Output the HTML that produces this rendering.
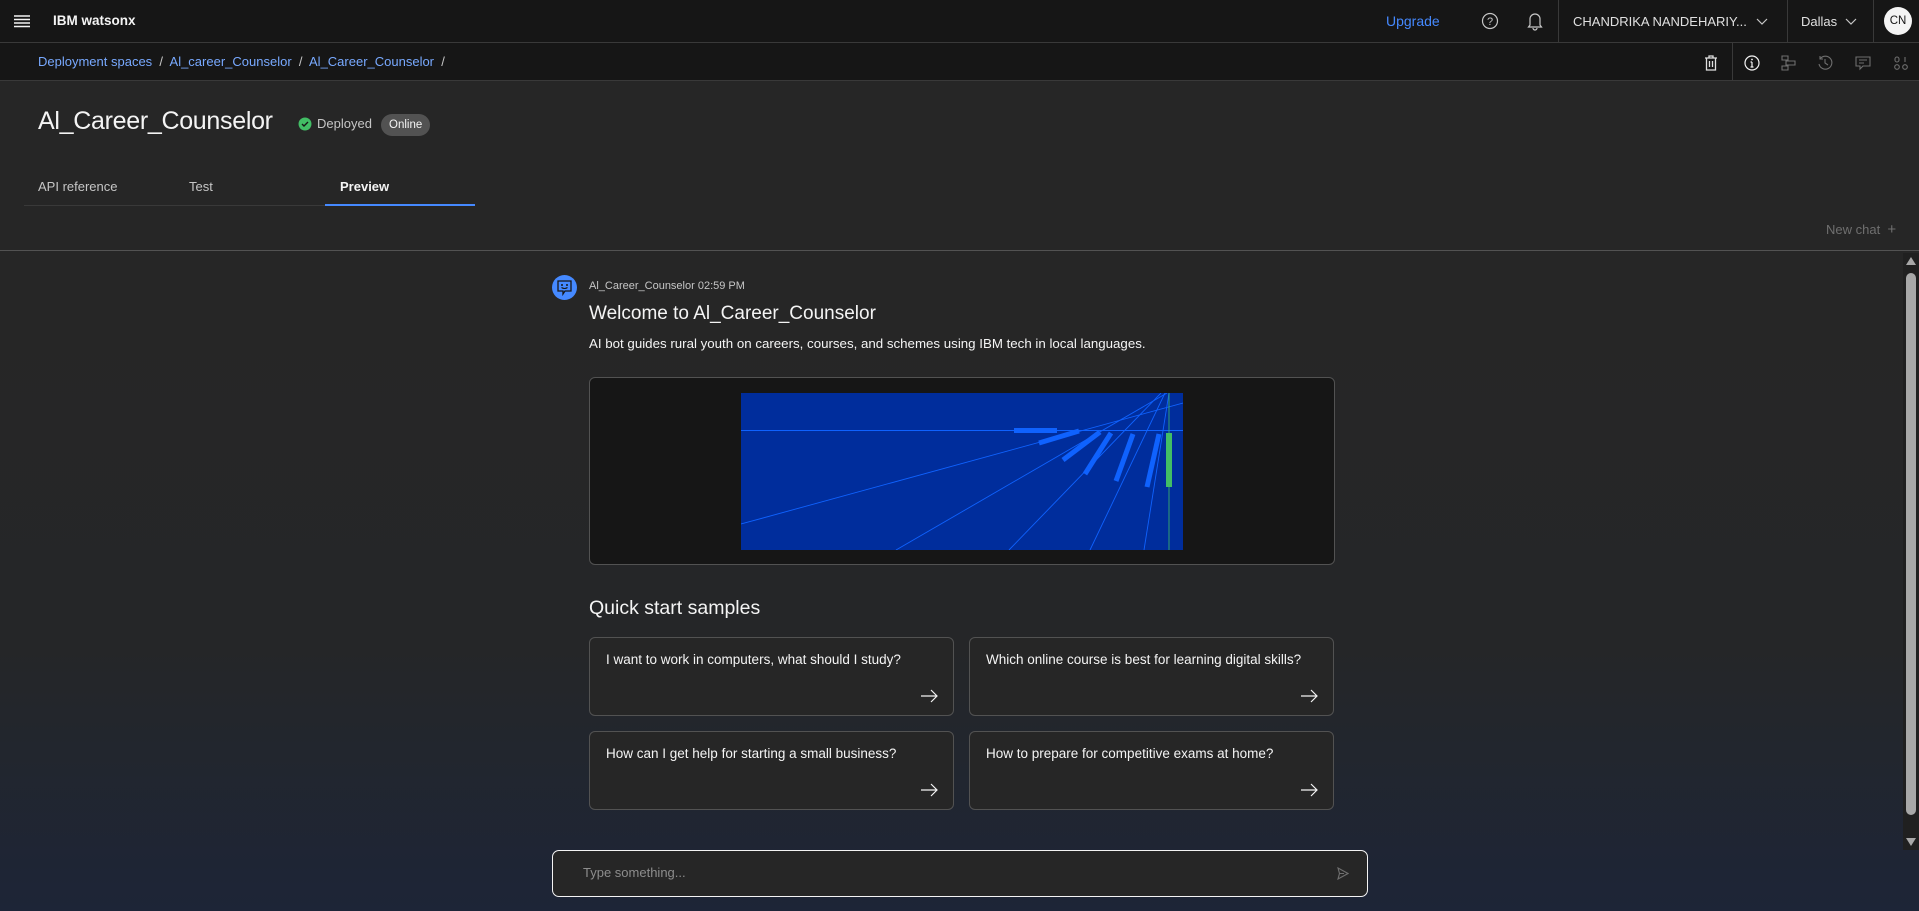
<!DOCTYPE html>
<html><head><meta charset="utf-8"><style>
*{box-sizing:border-box;margin:0;padding:0}
body{width:1919px;height:911px;overflow:hidden;background:#262626;font-family:"Liberation Sans",sans-serif;color:#f4f4f4;position:relative}
.abs{position:absolute}
.hdr{left:0;top:0;width:1919px;height:43px;background:#161616;border-bottom:1px solid #393939}
.bc{left:0;top:43px;width:1919px;height:38px;background:#161616;border-bottom:1px solid #393939}
.t{white-space:nowrap}
.chat{left:0;top:250px;width:1919px;height:661px;background:linear-gradient(#262626 0%,#252628 60%,#1d2537 100%);border-top:1px solid #525252}
.card{width:365px;height:79px;border:1px solid #525252;border-radius:6px;background:#262626}
.card span{position:absolute;left:16px;top:14px;font-size:13.5px;color:#f4f4f4}
.card svg{position:absolute;right:14px;bottom:12px}
</style></head><body>
<div class="abs hdr">
 <svg class="abs" style="left:14px;top:14px" width="16" height="14"><g stroke="#f4f4f4" stroke-width="1.4"><path d="M0 2H16M0 5.5H16M0 9H16M0 12.5H16"/></g></svg>
 <div class="abs t" style="left:53px;top:13px;font-size:13.5px;font-weight:bold">IBM watsonx</div>
 <div class="abs t" style="left:1386px;top:13px;font-size:14px;color:#4589ff">Upgrade</div>
 <svg class="abs" style="left:1481px;top:12px" width="18" height="18"><circle cx="9" cy="9" r="7.5" fill="none" stroke="#c6c6c6" stroke-width="1.2"/><text x="9" y="13" font-size="11" fill="#c6c6c6" text-anchor="middle" font-family="Liberation Sans">?</text></svg>
 <svg class="abs" style="left:1527px;top:11px" width="16" height="20"><path d="M3 14V8a5 5 0 0 1 10 0v6l1.5 2h-13z M6 17a2 2 0 0 0 4 0" fill="none" stroke="#c6c6c6" stroke-width="1.2"/></svg>
 <div class="abs" style="left:1558px;top:0;width:1px;height:43px;background:#393939"></div>
 <div class="abs t" style="left:1573px;top:14px;font-size:13px;color:#e0e0e0">CHANDRIKA NANDEHARIY...</div>
 <svg class="abs" style="left:1756px;top:18px" width="12" height="8"><path d="M1 1l5 5 5-5" fill="none" stroke="#c6c6c6" stroke-width="1.2"/></svg>
 <div class="abs" style="left:1787px;top:0;width:1px;height:43px;background:#393939"></div>
 <div class="abs t" style="left:1801px;top:14px;font-size:13px;color:#e0e0e0">Dallas</div>
 <svg class="abs" style="left:1845px;top:18px" width="12" height="8"><path d="M1 1l5 5 5-5" fill="none" stroke="#c6c6c6" stroke-width="1.2"/></svg>
 <div class="abs" style="left:1873px;top:0;width:1px;height:43px;background:#393939"></div>
 <div class="abs" style="left:1884px;top:7px;width:28px;height:28px;border-radius:50%;background:#f4f4f4;color:#161616;font-size:11.5px;text-align:center;line-height:28px">CN</div>
</div>
<div class="abs bc">
 <div class="abs t" style="left:38px;top:11px;font-size:13px;color:#78a9ff">Deployment spaces <span style="color:#c6c6c6">&nbsp;/&nbsp;</span> Al_career_Counselor <span style="color:#c6c6c6">&nbsp;/&nbsp;</span> Al_Career_Counselor <span style="color:#c6c6c6">&nbsp;/</span></div>
 <svg class="abs" style="left:1704px;top:12px" width="14" height="16"><path d="M1 3h12M5 3V1h4v2M2.5 3v12h9V3M5.5 6v6M8.5 6v6" fill="none" stroke="#e0e0e0" stroke-width="1.3"/></svg>
 <div class="abs" style="left:1732px;top:0;width:1px;height:38px;background:#393939"></div>
 <svg class="abs" style="left:1744px;top:12px" width="16" height="16"><circle cx="8" cy="8" r="7" fill="none" stroke="#f4f4f4" stroke-width="1.2"/><path d="M8 7v5M6.5 12h3M6.5 7H8" stroke="#f4f4f4" stroke-width="1.2"/><circle cx="8" cy="4.5" r="0.9" fill="#f4f4f4"/></svg>
 <svg class="abs" style="left:1781px;top:12px" width="16" height="16"><path d="M1 1h6v4H1zM5 6h9v4H5zM1 11h6v4H1z" fill="none" stroke="#6f6f6f" stroke-width="1.1"/></svg>
 <svg class="abs" style="left:1817px;top:12px" width="16" height="16"><path d="M3 4a6.5 6.5 0 1 1-1 5M3 1v3h3M8 4v4l3 2" fill="none" stroke="#6f6f6f" stroke-width="1.1"/></svg>
 <svg class="abs" style="left:1855px;top:12px" width="16" height="16"><path d="M1 2h14v9H8l-3 3v-3H1zM4 5h8M4 8h5" fill="none" stroke="#6f6f6f" stroke-width="1.1"/></svg>
 <svg class="abs" style="left:1893px;top:12px" width="16" height="16"><g fill="none" stroke="#6f6f6f" stroke-width="1.1"><circle cx="4" cy="12" r="2.3"/><circle cx="12" cy="12" r="2.3"/><rect x="2" y="2" width="4" height="5" rx="2"/><path d="M12 2v5"/></g></svg>
</div>
<div class="abs t" style="left:38px;top:107px;font-size:25px;letter-spacing:-0.3px;color:#f4f4f4">Al_Career_Counselor</div>
<svg class="abs" style="left:298px;top:117px" width="14" height="14"><circle cx="7" cy="7" r="6.5" fill="#42be65"/><path d="M4 7l2 2 4-4" fill="none" stroke="#161616" stroke-width="1.4"/></svg>
<div class="abs t" style="left:317px;top:116px;font-size:13px;color:#c6c6c6">Deployed</div>
<div class="abs t" style="left:381px;top:114px;height:22px;padding:0 8px;border-radius:11px;background:#525252;font-size:11.5px;line-height:22px;color:#f4f4f4">Online</div>
<div class="abs" style="left:24px;top:205px;width:451px;height:1px;background:#393939"></div>
<div class="abs t" style="left:38px;top:179px;font-size:13px;color:#c6c6c6">API reference</div>
<div class="abs t" style="left:189px;top:179px;font-size:13px;color:#c6c6c6">Test</div>
<div class="abs t" style="left:340px;top:179px;font-size:13px;font-weight:bold;color:#f4f4f4">Preview</div>
<div class="abs" style="left:325px;top:204px;width:150px;height:2px;background:#4589ff"></div>
<div class="abs t" style="left:1826px;top:221px;font-size:13px;color:#6f6f6f">New chat &nbsp;<span style="font-size:15px">+</span></div>
<div class="abs chat"></div>
<div class="abs" style="left:552px;top:275px;width:25px;height:25px;border-radius:50%;background:#4589ff"></div>
<svg class="abs" style="left:557px;top:280px" width="15" height="16"><path d="M1 1h13v10H8l-2 3v-3H1z" fill="none" stroke="#161616" stroke-width="1.3"/><circle cx="5" cy="5" r="1" fill="#161616"/><circle cx="10" cy="5" r="1" fill="#161616"/><path d="M4.5 7.5q3 2 6 0" fill="none" stroke="#161616" stroke-width="1.1"/></svg>
<div class="abs t" style="left:589px;top:280px;font-size:11px;color:#c6c6c6">Al_Career_Counselor 02:59 PM</div>
<div class="abs t" style="left:589px;top:303px;font-size:19px;color:#f4f4f4">Welcome to Al_Career_Counselor</div>
<div class="abs t" style="left:589px;top:336px;font-size:13.3px;color:#f4f4f4">AI bot guides rural youth on careers, courses, and schemes using IBM tech in local languages.</div>
<div class="abs" style="left:589px;top:377px;width:746px;height:188px;border:1px solid #525252;border-radius:6px;background:#161616"></div>
<svg class="abs" style="left:741px;top:393px" width="442" height="157" viewBox="0 0 442 157"><rect width="442" height="157" fill="#002d9c"/>
<g stroke="#0f62fe" stroke-width="0.9" fill="none"><path d="M0 37.5H442"/><path d="M0 131L442 10"/><path d="M155 157L426 0"/><path d="M268 157L420 0"/><path d="M349 157L424 0"/><path d="M403 157L428 0"/></g>
<path d="M428 0V157" stroke="#42be65" stroke-width="0.8"/>
<g stroke="#0f62fe" stroke-width="5" fill="none"><path d="M273 37.5H316"/><path d="M298 50L338 38"/><path d="M322 67L359 39"/><path d="M344 81L370 40"/><path d="M375 88L392 41"/><path d="M406 94L418 41"/></g>
<path d="M428 40V94" stroke="#42be65" stroke-width="6"/></svg>
<div class="abs t" style="left:589px;top:597px;font-size:19.5px;color:#f4f4f4">Quick start samples</div>
<div class="abs card" style="left:589px;top:637px"><span>I want to work in computers, what should I study?</span><svg width="18" height="14"><path d="M0 7h16M10 1l6 6-6 6" fill="none" stroke="#f4f4f4" stroke-width="1.2"/></svg></div>
<div class="abs card" style="left:969px;top:637px"><span>Which online course is best for learning digital skills?</span><svg width="18" height="14"><path d="M0 7h16M10 1l6 6-6 6" fill="none" stroke="#f4f4f4" stroke-width="1.2"/></svg></div>
<div class="abs card" style="left:589px;top:731px"><span>How can I get help for starting a small business?</span><svg width="18" height="14"><path d="M0 7h16M10 1l6 6-6 6" fill="none" stroke="#f4f4f4" stroke-width="1.2"/></svg></div>
<div class="abs card" style="left:969px;top:731px"><span>How to prepare for competitive exams at home?</span><svg width="18" height="14"><path d="M0 7h16M10 1l6 6-6 6" fill="none" stroke="#f4f4f4" stroke-width="1.2"/></svg></div>
<div class="abs" style="left:552px;top:850px;width:816px;height:47px;border:1.5px solid #f4f4f4;border-radius:7px;background:#262626"></div>
<div class="abs t" style="left:583px;top:865px;font-size:13px;color:#8d8d8d">Type something...</div>
<svg class="abs" style="left:1337px;top:867px" width="12" height="13"><path d="M1 1l10 5.5L1 12l1.5-5.5z M2.5 6.5H7" fill="none" stroke="#6f6f6f" stroke-width="1.1"/></svg>
<div class="abs" style="left:1903px;top:253px;width:16px;height:597px;background:#202020"></div>
<svg class="abs" style="left:1906px;top:257px" width="10" height="8"><path d="M0 8L5 0 10 8z" fill="#a8a8a8"/></svg>
<div class="abs" style="left:1906px;top:273px;width:10px;height:542px;border-radius:5px;background:#a8a8a8"></div>
<svg class="abs" style="left:1906px;top:838px" width="10" height="8"><path d="M0 0L5 8 10 0z" fill="#a8a8a8"/></svg>
</body></html>
